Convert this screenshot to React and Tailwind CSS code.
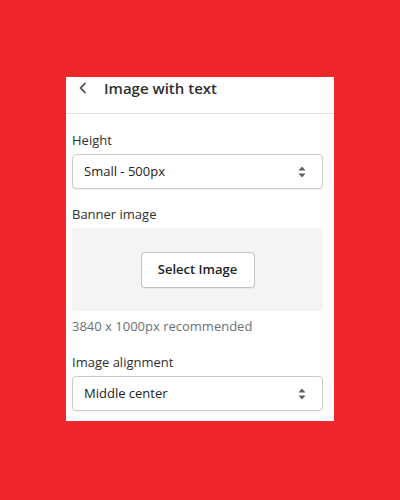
import React from "react";

function Carets() {
  return (
    <svg width="10" height="14" viewBox="0 0 10 14" className="text-[#5c5f62]">
      <path d="M5 1.5 L8.5 5.5 H1.5 Z" fill="currentColor" />
      <path d="M5 12.5 L8.5 8.5 H1.5 Z" fill="currentColor" />
    </svg>
  );
}

function SelectBox({ value }) {
  return (
    <div className="flex h-[35px] items-center justify-between rounded-[4px] border border-[#c9cccf] bg-white pl-[11px] pr-[15px] shadow-[0_1px_0_rgba(0,0,0,0.05)]">
      <span className="text-[13px] text-[#202223]">{value}</span>
      <Carets />
    </div>
  );
}

export default function App() {
  return (
    <div
      className="flex h-[500px] w-[400px] justify-center bg-[#f1262b] pt-[77px]"
      style={{ fontFamily: '"Open Sans", "Noto Sans", sans-serif' }}
    >
      <div className="h-[344px] w-[268px] bg-white">
        {/* header */}
        <div className="flex h-[37px] items-center border-b border-[#e1e3e5] pb-[14px] pl-[10px]">
          <svg width="14" height="14" viewBox="0 0 14 14" className="text-[#5c5f62]">
            <path d="M9 2.5 L4.5 7 L9 11.5" fill="none" stroke="currentColor" strokeWidth="1.8" strokeLinecap="round" strokeLinejoin="round" />
          </svg>
          <span className="ml-[14px] text-[15px] font-semibold text-[#303030]">Image with text</span>
        </div>

        <div className="pl-[6px] pr-[11px] pt-[16px]">
          <div className="mb-[4px] text-[13px] leading-[20px] text-[#303030]">Height</div>
          <SelectBox value="Small - 500px" />

          <div className="mb-[4px] mt-[15px] text-[13px] leading-[20px] text-[#303030]">Banner image</div>
          <div className="flex h-[83px] items-center justify-center rounded-[3px] bg-[#f4f4f6]">
            <button className="h-[36px] w-[114px] rounded-[4px] border border-[#bfc3c7] bg-white text-[13px] font-semibold text-[#202223] shadow-[0_1px_0_rgba(0,0,0,0.05)]">
              Select Image
            </button>
          </div>
          <div className="mt-[5px] text-[13px] leading-[20px] text-[#6d7175]">3840 x 1000px recommended</div>

          <div className="mb-[4px] mt-[16px] text-[13px] leading-[20px] text-[#303030]">Image alignment</div>
          <SelectBox value="Middle center" />
        </div>
      </div>
    </div>
  );
}
